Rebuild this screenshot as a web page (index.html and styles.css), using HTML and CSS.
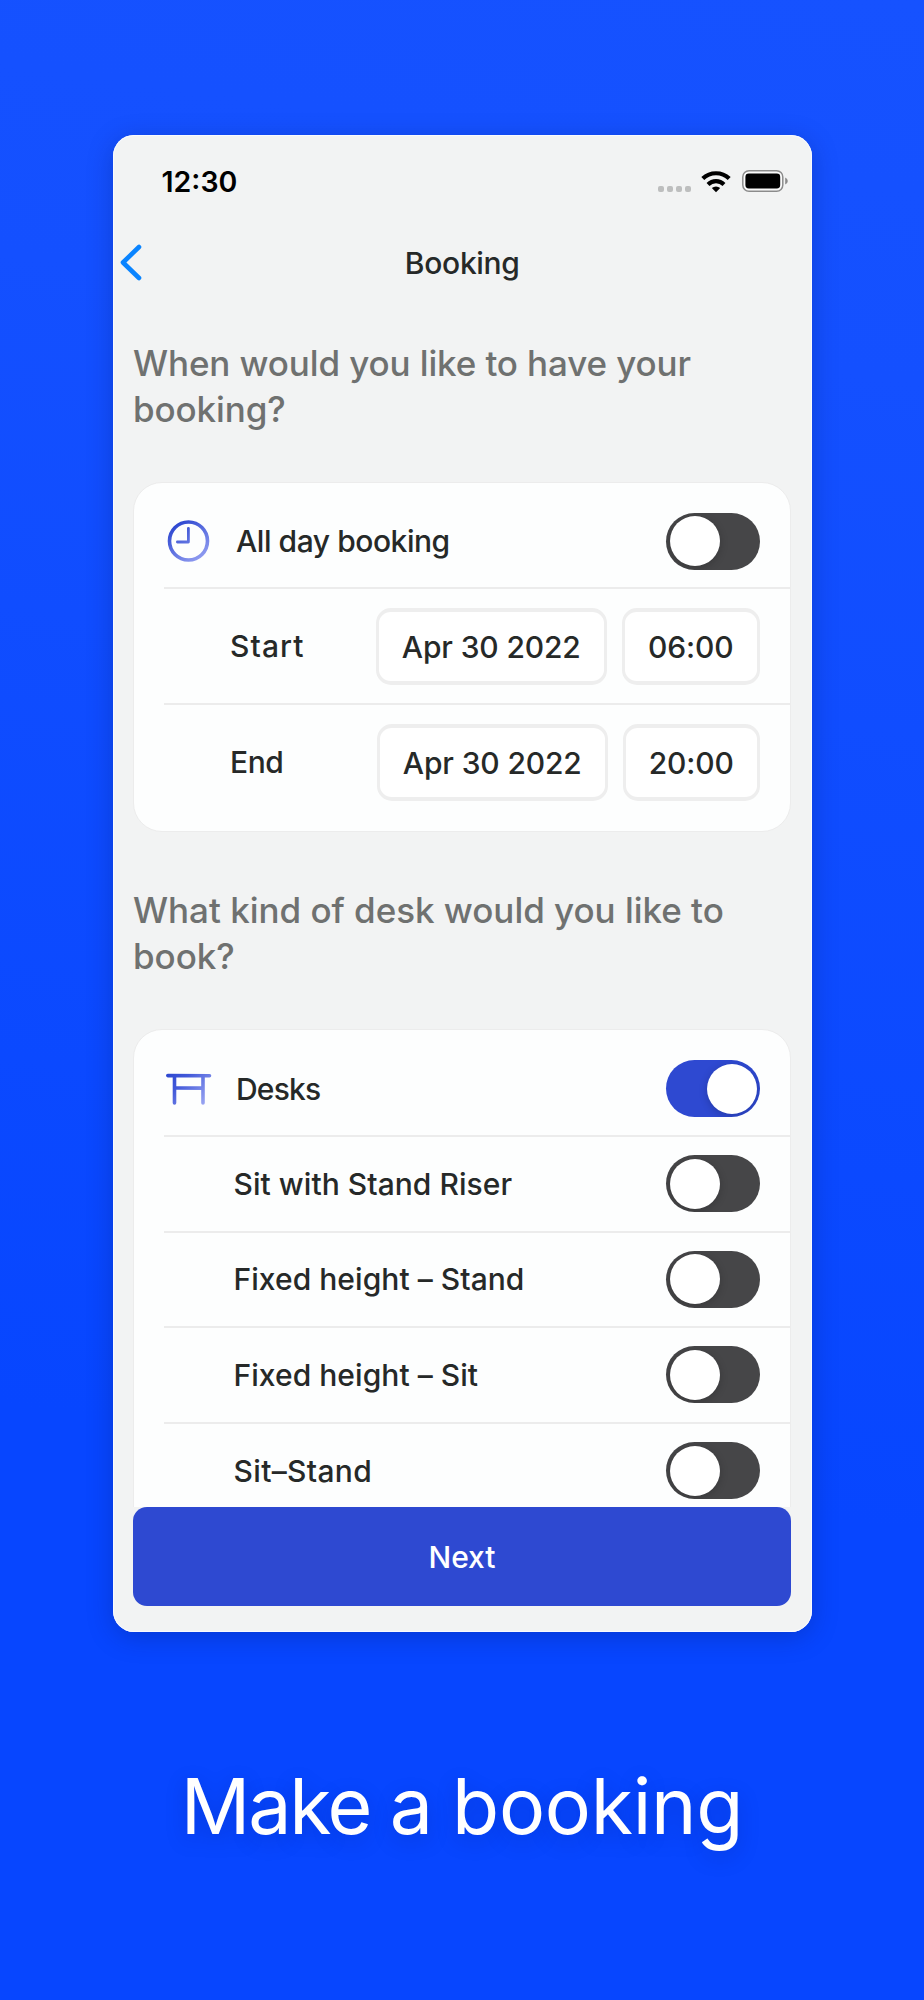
FILE: index.html
```html
<!DOCTYPE html>
<html lang="en">
<head>
<meta charset="utf-8">
<title>Booking</title>
<link rel="stylesheet" href="styles.css">
</head>
<body>
<div class="phone">
  <div class="status-bar">
    <span class="time">12:30</span>
    <div class="status-icons">
      <div class="signal"><i></i><i></i><i></i><i></i></div>
      <svg class="wifi" width="30" height="23" viewBox="0 0 30 23">
        <g fill="none" stroke="#000" stroke-width="4.2">
          <path d="M1.8 8.6A19 19 0 0 1 28.2 8.6"/>
          <path d="M7 14.4A11.6 11.6 0 0 1 23 14.4"/>
        </g>
        <path d="M15 22.3L10.8 18.1A6 6 0 0 1 19.2 18.1Z"/>
      </svg>
      <svg class="battery" width="48" height="24" viewBox="0 0 48 24">
        <rect x="1.8" y="1.7" width="40" height="20.6" rx="6.2" fill="#fafafa" stroke="#8b8b8b" stroke-width="1.5"/>
        <rect x="4.4" y="4.5" width="34.8" height="15" rx="3.4"/>
        <path d="M44.2 8.4Q46.8 9.4 46.8 12T44.2 15.6Z" fill="#8b8b8b"/>
      </svg>
    </div>
  </div>

  <div class="nav-bar">
    <svg class="back" width="24" height="40" viewBox="0 0 24 40">
      <path d="M20 4L4 19.5L20 35" fill="none" stroke="#0a84ff" stroke-width="4.6" stroke-linecap="round" stroke-linejoin="round"/>
    </svg>
    <span class="nav-title">Booking</span>
  </div>

  <div class="content">
    <h2>When would you like to have your<br>booking?</h2>
    <div class="card">
      <div class="row row-first">
        <svg class="icon" width="48" height="48" viewBox="0 0 48 48">
          <defs>
            <linearGradient id="clock-grad" gradientUnits="userSpaceOnUse" x1="12" y1="8" x2="36" y2="42">
              <stop offset="0" stop-color="#2f49d1"/>
              <stop offset="1" stop-color="#8f9bf0"/>
            </linearGradient>
          </defs>
          <g fill="none" stroke="url(#clock-grad)">
            <circle cx="24.5" cy="24" r="19" stroke-width="3.6"/>
            <path d="M24.4 11.3V25H13.4" stroke-width="2.8" stroke-linecap="round" stroke-linejoin="round"/>
          </g>
        </svg>
        <span class="label label-all-day">All day booking</span>
        <div class="toggle"></div>
      </div>
      <div class="row row-date">
        <span class="label label-start">Start</span>
        <div class="field field-date">Apr 30 2022</div>
        <div class="field field-time">06:00</div>
      </div>
      <div class="row row-date row-end">
        <span class="label label-end">End</span>
        <div class="field field-date">Apr 30 2022</div>
        <div class="field field-time">20:00</div>
      </div>
    </div>

    <h2 class="second">What kind of desk would you like to<br>book?</h2>
    <div class="card card-desks">
      <div class="row row-first">
        <svg class="icon" width="48" height="48" viewBox="0 0 48 48">
          <defs>
            <linearGradient id="desk-grad" gradientUnits="userSpaceOnUse" x1="6" y1="8" x2="42" y2="42">
              <stop offset="0" stop-color="#2f49d1"/>
              <stop offset=".3" stop-color="#4259d9"/>
              <stop offset="1" stop-color="#a3adf5"/>
            </linearGradient>
          </defs>
          <g fill="none" stroke="url(#desk-grad)" stroke-width="3.6" stroke-linecap="round">
            <path d="M3.8 10.6L45.5 10.7"/>
            <path d="M10.5 12V38M39 12V38"/>
            <path d="M12 23L38 23.1"/>
          </g>
        </svg>
        <span class="label label-desks">Desks</span>
        <div class="toggle on"></div>
      </div>
      <div class="row"><span class="label">Sit with Stand Riser</span><div class="toggle"></div></div>
      <div class="row"><span class="label">Fixed height – Stand</span><div class="toggle"></div></div>
      <div class="row"><span class="label">Fixed height – Sit</span><div class="toggle"></div></div>
      <div class="row"><span class="label label-sit-stand">Sit–Stand</span><div class="toggle"></div></div>
      <div class="row"></div>
    </div>
  </div>

  <button class="next">Next</button>
</div>
<h1><span class="tight">Make a</span> booking</h1>
</body>
</html>
```

FILE: styles.css
```css
* {
  box-sizing: border-box;
}
body {
  margin: 0;
  height: 2000px;
  overflow: hidden;
  padding-top: 135px;
  background: linear-gradient(188deg, #1652ff 0%, #1450ff 18%, #0746ff 72%, #0746ff 100%);
  font-family: Inter, "Liberation Sans", sans-serif;
  color: #262928;
}
.phone {
  display: flex;
  flex-direction: column;
  width: 699px;
  height: 1497px;
  margin: 0 auto;
  background: #f2f3f3;
  border-radius: 21px;
  box-shadow: 0 5px 26px rgba(0, 25, 110, 0.3), inset 0 0 0 1px #f9faff;
}

/* status bar */
.status-bar {
  display: flex;
  justify-content: space-between;
  align-items: center;
  height: 92px;
  padding: 0 23px 0 49px;
}
.time {
  font-size: 28.5px;
  font-weight: 600;
  color: #000;
}
.status-icons {
  display: flex;
  align-items: center;
}
.signal {
  display: flex;
  gap: 2.7px;
  margin: 15px 10px 0 0;
}
.signal i {
  width: 6px;
  height: 6px;
  border-radius: 2px;
  background: #bdbebe;
}
.wifi {
  margin-right: 10px;
}

/* nav bar */
.nav-bar {
  display: flex;
  align-items: center;
  height: 71px;
  padding: 0 30px 0 6.5px;
}
.back {
  flex: none;
}
.nav-title {
  flex: 1;
  text-align: center;
  font-size: 30px;
  font-weight: 500;
  letter-spacing: -0.3px;
}

/* form */
.content {
  flex: none;
  height: 1208.5px;
  overflow: hidden;
  padding: 42px 21px 0 20.5px;
}
h2 {
  margin: 0 0 50px;
  font-size: 35px;
  line-height: 46px;
  font-weight: 500;
  letter-spacing: -0.12px;
  color: #6f7170;
  white-space: nowrap;
}
h2.second {
  margin-top: 55.5px;
  margin-bottom: 50px;
  letter-spacing: -0.03px;
}
.card {
  border: 1.5px solid #ececec;
  border-radius: 29px;
  background: #fdfefe;
}
.row {
  display: flex;
  align-items: center;
  height: 95.6px;
  margin-left: 30px;
  padding-right: 29.5px;
  border-top: 2px solid #ececec;
}
.row-first {
  height: 104px;
  padding-top: 12px;
  border-top: 0;
}
.card-desks .row-first {
  height: 105px;
}
.row-date {
  height: 116px;
}
.row-end {
  height: 127.5px;
  padding-bottom: 11px;
}
.icon {
  flex: none;
}
.label {
  flex: 1;
  padding-left: 69.5px;
  font-size: 30px;
  font-weight: 500;
  letter-spacing: 0.05px;
  white-space: nowrap;
}
.row-first .label {
  padding-left: 24px;
}
.row-date .label {
  padding-left: 66px;
}
.label-all-day {
  letter-spacing: -0.45px;
}
.label-start {
  letter-spacing: 1.1px;
}
.label-end {
  letter-spacing: -0.4px;
}
.label-desks {
  letter-spacing: -0.8px;
}
.label-sit-stand {
  letter-spacing: 0.35px;
}
.toggle {
  flex: none;
  width: 94px;
  height: 57px;
  padding: 3.5px;
  border-radius: 29px;
  background: #464648;
  overflow: hidden;
}
.toggle::before {
  content: "";
  display: block;
  width: 50px;
  height: 50px;
  border-radius: 50%;
  background: #fff;
  box-shadow: 0 2px 8px rgba(0, 0, 0, 0.2);
}
.toggle.on {
  background: #2e49d1;
}
.toggle.on::before {
  margin-left: auto;
}
.field {
  height: 77px;
  border: 3.6px solid #eeeeee;
  border-width: 4px 3.6px;
  border-radius: 15px;
  background: #fff;
  line-height: 70px;
  text-align: center;
  font-size: 30px;
  font-weight: 500;
  letter-spacing: -0.15px;
}
.field-date {
  width: 230.5px;
  margin-right: 15px;
}
.field-time {
  width: 138.5px;
}
.row-end .field-time {
  width: 137.5px;
}
.next {
  width: 658px;
  height: 99.5px;
  margin: 0 auto;
  padding-top: 2px;
  border: 0;
  border-radius: 14px;
  background: #2e49d1;
  color: #fff;
  font: 500 30px Inter, "Liberation Sans", sans-serif;
}
h1 {
  margin: 119px 0 0;
  text-align: center;
  font-size: 77px;
  line-height: 110px;
  font-weight: 400;
  letter-spacing: -0.3px;
  color: #fff;
  text-shadow: 0 6px 20px rgba(0, 25, 110, 0.25);
}
h1 .tight {
  letter-spacing: -2.2px;
}
```
